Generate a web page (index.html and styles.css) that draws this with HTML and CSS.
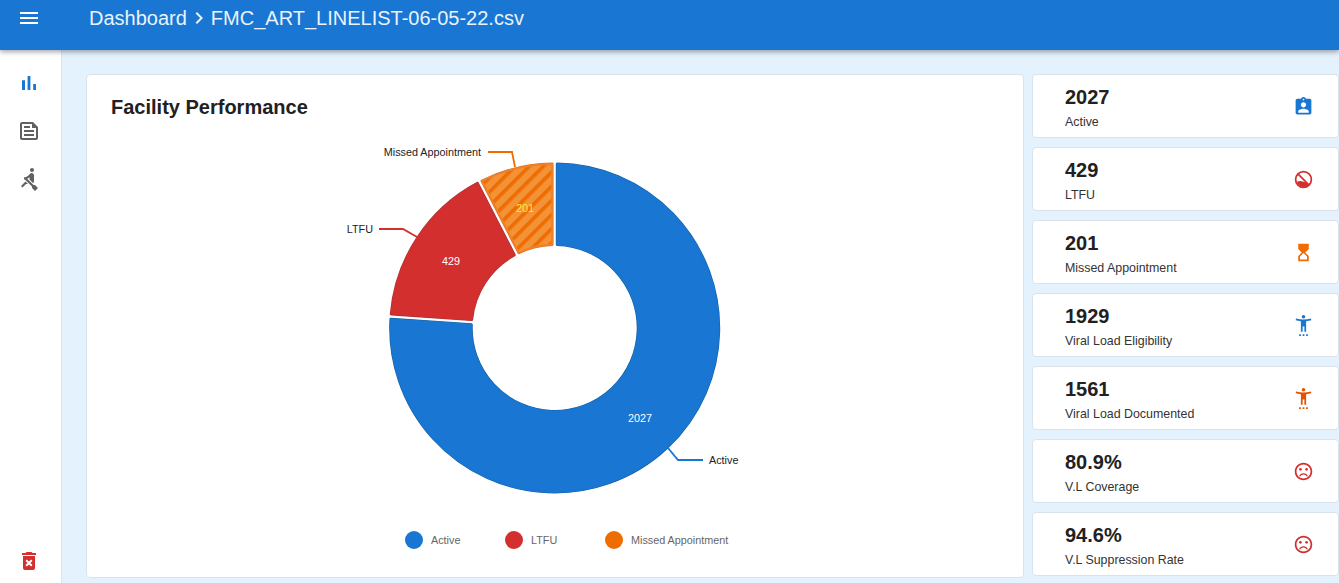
FILE: index.html
```html
<!DOCTYPE html>

<html>

<head>
	<title>Facility Performance</title>
	<link rel="stylesheet" href="styles.css">
</head>

<body>
	<header class="topbar">
		<svg class="icon menu-icon" viewBox="0 0 24 24"><path d="M3 18h18v-2H3v2zm0-5h18v-2H3v2zm0-7v2h18V6H3z"/></svg>
		<div class="crumbs">
			<span>Dashboard</span>
			<svg class="icon" viewBox="0 0 24 24"><path d="M10 6L8.59 7.41 13.17 12l-4.58 4.59L10 18l6-6z"/></svg>
			<span>FMC_ART_LINELIST-06-05-22.csv</span>
		</div>
	</header>

	<div class="layout">
		<nav class="sidebar">
			<a class="nav-item blue"><svg class="icon" viewBox="0 0 24 24"><path d="M5 9.2h3V19H5zM10.6 5h2.8v14h-2.8zm5.6 8H19v6h-2.8z"/></svg></a>
			<a class="nav-item grey"><svg class="icon" viewBox="0 0 24 24"><path d="M16 3H5c-1.1 0-2 .9-2 2v14c0 1.1.9 2 2 2h14c1.1 0 2-.9 2-2V8l-5-5zm3 16H5V5h10v4h4v10zM7 17h10v-2H7v2zm0-4h10v-2H7v2zm0-4h6V7H7v2z"/></svg></a>
			<a class="nav-item grey"><svg class="icon" viewBox="0 0 24 24"><path d="M8.5 14.5L4 19l1.5 1.5L9 17h2l-2.5-2.5zM15 1c-1.1 0-2 .9-2 2s.9 2 2 2 2-.9 2-2-.9-2-2-2zm6 20.01L18 24l-2.99-3.01V19.5l-7.1-7.09c-.31.05-.61.07-.91.07v-2.16c1.66.03 3.61-.87 4.67-2.04l1.4-1.55c.19-.21.43-.38.69-.5.29-.14.62-.23.96-.23h.03C15.99 6.01 17 7.02 17 8.26v5.75c0 .84-.35 1.61-.92 2.16l-3.58-3.58v-2.27c-.63.52-1.43 1.02-2.29 1.39L16.5 18H18l3 3.01z"/></svg></a>
			<a class="nav-item red bottom"><svg class="icon" viewBox="0 0 24 24"><path d="M6 19c0 1.1.9 2 2 2h8c1.1 0 2-.9 2-2V7H6v12zm2.46-7.12l1.41-1.41L12 12.59l2.12-2.12 1.41 1.41L13.41 14l2.12 2.12-1.41 1.41L12 15.41l-2.12 2.12-1.41-1.41L10.59 14l-2.13-2.12zM15.5 4l-1-1h-5l-1 1H5v2h14V4z"/></svg></a>
		</nav>

		<main class="content">
			<section class="card chart-card">
				<h2>Facility Performance</h2>
				<svg class="chart" viewBox="86 130 938 380">
					<defs>
						<pattern id="stripes" patternUnits="userSpaceOnUse" width="10" height="10" patternTransform="rotate(45)">
							<rect width="10" height="10" fill="#f39237"/>
							<rect width="3.6" height="10" fill="#ef6c00"/>
						</pattern>
						<path id="slice-active" d="M557.3 164.02A164 164 0 1 1 390.94 319.15L471.26 324.77A83.5 83.5 0 1 0 557.3 244.52Z"/>
						<path id="slice-ltfu" d="M391.3 313.97A164 164 0 0 1 477.43 183.34L514.24 254.96A83.5 83.5 0 0 0 471.63 319.58Z"/>
						<path id="slice-missed" d="M482.06 180.97A164 164 0 0 1 552.1 164.02L552.1 244.52A83.5 83.5 0 0 0 518.87 252.58Z"/>
					</defs>

					<!-- donut: centre 554.7,328, each slice a dark rim with the fill on top -->
					<use href="#slice-active" class="slice-rim" stroke="#15609f"/>
					<use href="#slice-active" class="slice-fill" fill="#1976d2" stroke="#1976d2"/>
					<use href="#slice-ltfu" class="slice-rim" stroke="#a83232"/>
					<use href="#slice-ltfu" class="slice-fill" fill="#d32f2f" stroke="#d32f2f"/>
					<use href="#slice-missed" class="slice-rim" stroke="#d0782c"/>
					<use href="#slice-missed" class="slice-fill" fill="url(#stripes)" stroke="#f0812a"/>

					<polyline class="leader" stroke="#1976d2" points="668,448 678,460 703,460"/>
					<polyline class="leader" stroke="#d32f2f" points="379,229 403,229 417,237"/>
					<polyline class="leader" stroke="#ef6c00" points="488,152 512,152 515,167"/>

					<text class="outer-label" x="709" y="464">Active</text>
					<text class="outer-label end" x="373" y="233">LTFU</text>
					<text class="outer-label end" x="481" y="156">Missed Appointment</text>

					<text class="value-label" x="640" y="422">2027</text>
					<text class="value-label" x="451" y="265">429</text>
					<text class="value-label yellow" x="525" y="212">201</text>
				</svg>
				<div class="legend">
					<div class="legend-item"><span class="dot dot-blue"></span>Active</div>
					<div class="legend-item"><span class="dot dot-red"></span>LTFU</div>
					<div class="legend-item"><span class="dot dot-orange"></span>Missed Appointment</div>
				</div>
			</section>

			<aside class="stats">
				<div class="card stat">
					<div class="stat-text"><div class="stat-value">2027</div><div class="stat-label">Active</div></div>
					<svg class="icon stat-icon blue" viewBox="0 0 24 24"><path d="M19 3h-4.18C14.4 1.84 13.3 1 12 1c-1.3 0-2.4.84-2.82 2H5c-1.1 0-2 .9-2 2v14c0 1.1.9 2 2 2h14c1.1 0 2-.9 2-2V5c0-1.1-.9-2-2-2zm-7 0c.55 0 1 .45 1 1s-.45 1-1 1-1-.45-1-1 .45-1 1-1zm0 4c1.66 0 3 1.34 3 3s-1.34 3-3 3-3-1.34-3-3 1.34-3 3-3zm6 12H6v-1.4c0-2 4-3.1 6-3.1s6 1.1 6 3.1V19z"/></svg>
				</div>
				<div class="card stat">
					<div class="stat-text"><div class="stat-value">429</div><div class="stat-label">LTFU</div></div>
					<svg class="icon stat-icon red" viewBox="0 0 24 24"><path d="M12 2a10 10 0 1 0 0 20 10 10 0 0 0 0-20zm0 2a8 8 0 1 1 0 16 8 8 0 0 1 0-16z"/><path d="M6.3 4.9l12.8 12.8-1.4 1.4L4.9 6.3z"/><path d="M4.5 14.5c2.5-1 5-1 7.5 0 1.2.4 2.3.6 3.3.6L18 18a8 8 0 0 1-13.5-3.5z"/></svg>
				</div>
				<div class="card stat">
					<div class="stat-text"><div class="stat-value">201</div><div class="stat-label">Missed Appointment</div></div>
					<svg class="icon stat-icon orange" viewBox="0 0 24 24"><path d="M6 2v6h.01L6 8.01 10 12l-4 4 .01.01H6V22h12v-5.99h-.01L18 16l-4-4 4-3.99-.01-.01H18V2H6zm10 14.5V20H8v-3.5l4-4 4 4z"/></svg>
				</div>
				<div class="card stat">
					<div class="stat-text"><div class="stat-value">1929</div><div class="stat-label">Viral Load Eligibility</div></div>
					<svg class="icon stat-icon blue" viewBox="0 0 24 24"><path d="M12 4c1.1 0 2-.9 2-2s-.9-2-2-2-2 .9-2 2 .9 2 2 2zM7 24h2v-2H7v2zm4 0h2v-2h-2v2zm4 0h2v-2h-2v2zM20.5 4c-2.61.7-5.67 1-8.5 1s-5.89-.3-8.5-1L3 6c1.86.5 4 .83 6 1v12h2v-6h2v6h2V7c2-.17 4.14-.5 6-1l-.5-2z"/></svg>
				</div>
				<div class="card stat">
					<div class="stat-text"><div class="stat-value">1561</div><div class="stat-label">Viral Load Documented</div></div>
					<svg class="icon stat-icon deep-orange" viewBox="0 0 24 24"><path d="M12 4c1.1 0 2-.9 2-2s-.9-2-2-2-2 .9-2 2 .9 2 2 2zM7 24h2v-2H7v2zm4 0h2v-2h-2v2zm4 0h2v-2h-2v2zM20.5 4c-2.61.7-5.67 1-8.5 1s-5.89-.3-8.5-1L3 6c1.86.5 4 .83 6 1v12h2v-6h2v6h2V7c2-.17 4.14-.5 6-1l-.5-2z"/></svg>
				</div>
				<div class="card stat">
					<div class="stat-text"><div class="stat-value">80.9%</div><div class="stat-label">V.L Coverage</div></div>
					<svg class="icon stat-icon red" viewBox="0 0 24 24"><circle cx="15.5" cy="9.5" r="1.5"/><circle cx="8.5" cy="9.5" r="1.5"/><path d="M12 14c-2.33 0-4.32 1.45-5.12 3.5h1.67c.69-1.19 1.97-2 3.45-2s2.75.81 3.45 2h1.67c-.8-2.05-2.79-3.5-5.12-3.5zm-.01-12C6.47 2 2 6.48 2 12s4.47 10 9.99 10C17.52 22 22 17.52 22 12S17.52 2 11.99 2zM12 20c-4.42 0-8-3.58-8-8s3.58-8 8-8 8 3.58 8 8-3.58 8-8 8z"/></svg>
				</div>
				<div class="card stat">
					<div class="stat-text"><div class="stat-value">94.6%</div><div class="stat-label">V.L Suppression Rate</div></div>
					<svg class="icon stat-icon red" viewBox="0 0 24 24"><circle cx="15.5" cy="9.5" r="1.5"/><circle cx="8.5" cy="9.5" r="1.5"/><path d="M12 14c-2.33 0-4.32 1.45-5.12 3.5h1.67c.69-1.19 1.97-2 3.45-2s2.75.81 3.45 2h1.67c-.8-2.05-2.79-3.5-5.12-3.5zm-.01-12C6.47 2 2 6.48 2 12s4.47 10 9.99 10C17.52 22 22 17.52 22 12S17.52 2 11.99 2zM12 20c-4.42 0-8-3.58-8-8s3.58-8 8-8 8 3.58 8 8-3.58 8-8 8z"/></svg>
				</div>
			</aside>
		</main>
	</div>
</body>

</html>
```

FILE: styles.css
```css
html, body {
	height: 100%;
}

body {
	margin: 0;
	display: flex;
	flex-direction: column;
	overflow: hidden;
	font-family: "Liberation Sans", Arial, sans-serif;
	color: #212121;
	background-color: #e3f2fd;
}

.icon {
	display: block;
	width: 24px;
	height: 24px;
	fill: currentColor;
	flex: none;
}

.blue { color: #1976d2; }
.grey { color: #616161; }
.red { color: #d32f2f; }
.orange { color: #ef6c00; }
.deep-orange { color: #e65100; }

/* top bar */
.topbar {
	position: relative;
	z-index: 2;
	height: 50px;
	flex: none;
	display: flex;
	align-items: flex-start;
	padding: 6px 0 0 17px;
	box-sizing: border-box;
	color: #fff;
	background-color: #1976d2;
	box-shadow: 0 2px 5px rgba(0, 0, 0, 0.35);
}

.crumbs {
	display: flex;
	align-items: center;
	margin-left: 48px;
	height: 24px;
	font-size: 20px;
	color: #e8f3fc;
}

/* left rail */
.layout {
	flex: 1;
	display: flex;
	min-height: 0;
}

.sidebar {
	width: 62px;
	flex: none;
	box-sizing: border-box;
	display: flex;
	flex-direction: column;
	padding-top: 9px;
	background-color: #fff;
	border-right: 1px solid #dde5ec;
}

.nav-item {
	height: 48px;
	flex: none;
	display: flex;
	align-items: center;
	padding-left: 17px;
}

.nav-item.bottom {
	margin-top: auto;
	height: 44px;
}

/* main area */
.content {
	flex: 1;
	min-width: 0;
	display: grid;
	grid-template-columns: 938px 307px;
	column-gap: 8px;
	padding: 24px 0 0 24px;
	align-items: start;
}

.card {
	box-sizing: border-box;
	background-color: #fff;
	border: 1px solid #dbe3ea;
	border-radius: 4px;
}

.chart-card {
	height: 504px;
}

.chart-card h2 {
	margin: 0;
	padding: 21px 0 0 24px;
	height: 55px;
	box-sizing: border-box;
	font-size: 20px;
	line-height: 23px;
}

.chart {
	display: block;
	width: 938px;
	height: 380px;
	margin-left: -1px;
}

.slice-rim {
	fill: none;
	stroke-width: 3;
	stroke-linejoin: round;
}

.slice-fill {
	stroke-width: 1.8;
	stroke-linejoin: round;
}

.leader {
	fill: none;
	stroke-width: 1.8;
}

.outer-label {
	font-size: 10.8px;
	fill: #222;
}

.outer-label.end {
	text-anchor: end;
}

.value-label {
	font-size: 10.8px;
	fill: #fff;
	text-anchor: middle;
}

.value-label.yellow {
	fill: #ffeb3b;
}

.legend {
	display: grid;
	grid-template-columns: 100px 100px auto;
	margin: 21px 0 0 318px;
	font-size: 10.8px;
	color: #666;
}

.legend-item {
	display: flex;
	align-items: center;
	gap: 8px;
}

.dot {
	width: 18px;
	height: 18px;
	border-radius: 50%;
}

.dot-blue { background-color: #1976d2; }
.dot-red { background-color: #d32f2f; }
.dot-orange { background-color: #ef6c00; }

/* stat column */
.stats {
	display: flex;
	flex-direction: column;
	gap: 9px;
}

.stat {
	height: 64px;
	display: flex;
	align-items: center;
	justify-content: space-between;
	padding: 0 24px 0 32px;
}

.stat-text {
	padding-top: 4px;
}

.stat-value {
	font-size: 20px;
	font-weight: bold;
	line-height: 23px;
}

.stat-label {
	margin-top: 6px;
	font-size: 12.4px;
	line-height: 15px;
	color: #333;
}

.stat-icon {
	width: 21px;
	height: 21px;
}
```
